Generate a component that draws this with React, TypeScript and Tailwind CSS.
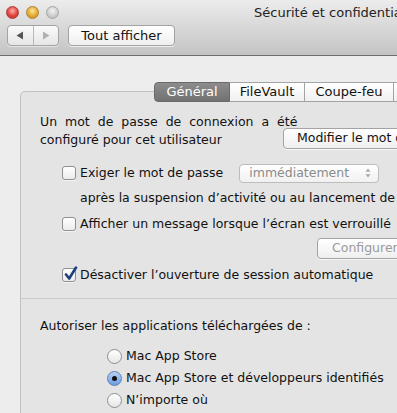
import React from 'react';

function Checkbox({ checked = false }: { checked?: boolean }) {
  return (
    <span className="relative inline-block w-[14px] h-[14px] shrink-0 rounded-[3px] border border-[#8f8f8f] bg-gradient-to-b from-white to-[#ececec] shadow-[0_1px_0_rgba(255,255,255,0.6)]">
      {checked && (
        <svg className="absolute -top-[3px] left-[1px]" width="14" height="15" viewBox="0 0 14 15">
          <path d="M2 8.5 L5.2 12.5 L12 1.5" fill="none" stroke="#1d3f7a" strokeWidth="2.6" strokeLinecap="round" strokeLinejoin="round" />
        </svg>
      )}
    </span>
  );
}

function Radio({ checked = false }: { checked?: boolean }) {
  return (
    <span
      className={
        checked
          ? 'flex items-center justify-center w-[15px] h-[15px] shrink-0 rounded-full border border-[#5b7fb5] bg-gradient-to-b from-[#b9d3f3] to-[#6b9de0]'
          : 'block w-[15px] h-[15px] shrink-0 rounded-full border border-[#8f8f8f] bg-gradient-to-b from-white to-[#e6e6e6]'
      }
    >
      {checked && <span className="block w-[5px] h-[5px] rounded-full bg-[#111]" />}
    </span>
  );
}

function MacButton({ children, disabled = false, className = '' }: { children: React.ReactNode; disabled?: boolean; className?: string }) {
  return (
    <div
      className={
        'flex items-center h-[21px] shrink-0 rounded-[4px] border border-[#a3a3a3] bg-gradient-to-b from-white to-[#efefef] shadow-[0_1px_0_rgba(255,255,255,0.7)] whitespace-nowrap ' +
        (disabled ? 'text-[#9a9a9a] ' : 'text-[#111] ') +
        className
      }
    >
      {children}
    </div>
  );
}

export default function App() {
  return (
    <div className="w-[397px] h-[413px] overflow-hidden bg-[#ededed] text-[12.5px] text-[#111]" style={{ fontFamily: '"Lucida Grande", "DejaVu Sans", sans-serif' }}>
      {/* Title bar */}
      <div className="h-[56px] border-b border-[#6e6e6e] bg-gradient-to-b from-[#ececec] to-[#c4c4c4]">
        <div className="flex items-center h-[24px] pt-[1px]">
          <div className="flex items-center gap-[7px] pl-[6px]">
            <span className="block w-[13px] h-[13px] rounded-full border border-[#b03a35] bg-[radial-gradient(circle_at_50%_35%,#ffb0a8,#e0443e_55%,#b8302b)]" />
            <span className="block w-[13px] h-[13px] rounded-full border border-[#b0822b] bg-[radial-gradient(circle_at_50%_35%,#ffe59a,#e3a935_55%,#c4882a)]" />
            <span className="block w-[13px] h-[13px] rounded-full border border-[#a5a5a5] bg-[radial-gradient(circle_at_50%_35%,#f4f4f4,#cfcfcf_55%,#b4b4b4)]" />
          </div>
          <span className="ml-[195px] whitespace-nowrap text-[#222] text-[13px]">Sécurité et confidentialité</span>
        </div>
        <div className="flex items-center pl-[7px] pt-[1px] gap-[9px]">
          <div className="flex h-[21px] w-[52px] rounded-[4px] border border-[#a3a3a3] bg-gradient-to-b from-[#fafafa] to-[#e6e6e6] shadow-[0_1px_0_rgba(255,255,255,0.5)]">
            <div className="flex flex-1 items-center justify-center border-r border-[#b9b9b9]">
              <svg width="8" height="9" viewBox="0 0 8 9"><path d="M7 0.5 V8.5 L0.5 4.5 Z" fill="#555" /></svg>
            </div>
            <div className="flex flex-1 items-center justify-center">
              <svg width="8" height="9" viewBox="0 0 8 9"><path d="M1 0.5 V8.5 L7.5 4.5 Z" fill="#b0b0b0" /></svg>
            </div>
          </div>
          <MacButton className="w-[107px] justify-center text-[13px]">Tout afficher</MacButton>
        </div>
      </div>

      {/* Content */}
      <div className="pl-[20px] pt-[35px]">
        <div className="w-[460px] h-[340px] rounded-[5px] border border-[#c2c2c2] bg-[#e4e4e4]">
          {/* Tabs */}
          <div className="-mt-[10px] ml-[133px] flex h-[20px] whitespace-nowrap text-[13px]">
            <div className="flex shrink-0 items-center justify-center w-[76px] rounded-l-[4px] border border-[#6a6a6a] bg-gradient-to-b from-[#8c8c8c] to-[#727272] text-white">Général</div>
            <div className="flex shrink-0 items-center justify-center w-[75px] border-y border-r border-[#a3a3a3] bg-gradient-to-b from-white to-[#f0f0f0]">
              FileVault
            </div>
            <div className="flex shrink-0 items-center justify-center w-[89px] border-y border-r border-[#a3a3a3] bg-gradient-to-b from-white to-[#f0f0f0]">
              Coupe-feu
            </div>
            <div className="flex shrink-0 items-center w-[100px] pl-[10px] rounded-r-[4px] border-y border-r border-[#a3a3a3] bg-gradient-to-b from-white to-[#f0f0f0]">
              Confidentialité
            </div>
          </div>

          <div className="pl-[19px]">
            {/* Password row */}
            <div className="mt-[11px] flex items-end">
              <div className="w-[243px] shrink-0 leading-[18px] whitespace-nowrap">
                <div className="[word-spacing:4px]">Un mot de passe de connexion a été</div>
                <div>configuré pour cet utilisateur</div>
              </div>
              <MacButton className="w-[140px] pl-[13px]">Modifier le mot de passe…</MacButton>
            </div>

            <div className="pl-[22px]">
              <div className="mt-[14px] flex items-center h-[20px] whitespace-nowrap">
                <Checkbox />
                <span className="ml-[4px]">Exiger le mot de passe</span>
                <div className="ml-[16px] flex shrink-0 items-center justify-between w-[140px] h-[19px] pl-[9px] pr-[7px] rounded-[4px] border border-[#bdbdbd] bg-gradient-to-b from-white to-[#f1f1f1] text-[#8a8a8a]">
                  <span>immédiatement</span>
                  <svg width="6" height="10" viewBox="0 0 6 10">
                    <path d="M3 0.5 L5.5 3.8 H0.5 Z M3 9.5 L5.5 6.2 H0.5 Z" fill="#a8a8a8" />
                  </svg>
                </div>
              </div>
              <div className="mt-[6px] pl-[18px] h-[18px] leading-[18px] whitespace-nowrap">après la suspension d’activité ou au lancement de l’économiseur d’écran</div>

              <div className="mt-[7px] flex items-center h-[20px] whitespace-nowrap">
                <Checkbox />
                <span className="ml-[4px]">Afficher un message lorsque l’écran est verrouillé</span>
              </div>
              <div className="mt-[4px] pl-[255px] flex">
                <MacButton disabled className="w-[120px] pl-[14px]">Configurer le message…</MacButton>
              </div>

              <div className="mt-[6px] flex items-center h-[20px] whitespace-nowrap">
                <Checkbox checked />
                <span className="ml-[4px]">Désactiver l’ouverture de session automatique</span>
              </div>
            </div>

            <div className="mt-[13px] -ml-[19px] border-t border-[#cacaca]" />

            <div className="mt-[18px] h-[18px] leading-[18px] whitespace-nowrap">Autoriser les applications téléchargées de :</div>

            <div className="mt-[10px] pl-[67px] flex flex-col">
              {[
                { label: 'Mac App Store', checked: false },
                { label: 'Mac App Store et développeurs identifiés', checked: true },
                { label: 'N’importe où', checked: false },
              ].map((r) => (
                <div key={r.label} className="flex items-center h-[22px] whitespace-nowrap">
                  <Radio checked={r.checked} />
                  <span className="ml-[4px]">{r.label}</span>
                </div>
              ))}
            </div>
          </div>
        </div>
      </div>
    </div>
  );
}
